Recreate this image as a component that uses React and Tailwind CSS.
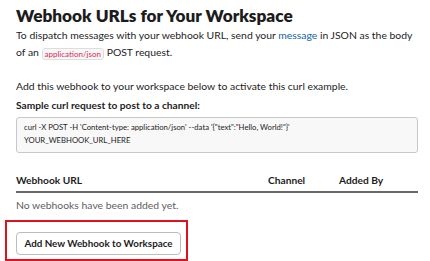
import React from 'react'

const COLUMNS = ['Webhook URL', 'Channel', 'Added By']

export default function App() {
  return (
    <div className="min-h-screen bg-white text-[#1d1c1d] font-['Lato','Noto_Sans',sans-serif] pl-4 pr-3 pt-[4px]">
      <h1 className="text-[17.2px] font-extrabold leading-[24px]">Webhook URLs for Your Workspace</h1>
      <p className="text-[10.4px] leading-[17px] mt-[-1.5px]">
        To dispatch messages with your webhook URL, send your{' '}
        <a className="text-[#1264a3]">message</a> in JSON as the body of an{' '}
        <code className="inline-block font-['Lato',sans-serif] text-[8px] leading-[10px] text-[#e01e5a] bg-[#f8f8f8] border border-[#dddddd] rounded-[3px] px-[2px] align-[-1px]">application/json</code>{' '}
        POST request.
      </p>
      <p className="text-[10.4px] leading-[17px] mt-[17px]">Add this webhook to your workspace below to activate this curl example.</p>
      <h2 className="text-[10.2px] leading-[17px] font-bold mt-[2px]">Sample curl request to post to a channel:</h2>
      <div className="mt-[3px] w-[402px] border border-[#c8c8c8] rounded-[3px] bg-[#f8f8f8] px-[7px] pt-[3px] pb-[5px] text-[7.7px] leading-[13px]">
        curl -X POST -H 'Content-type: application/json' --data '{'{'}"text":"Hello, World!"{'}'}'<br />
        YOUR_WEBHOOK_URL_HERE
      </div>
      <div className="w-[402px] mt-[19.5px] grid grid-cols-[252px_71px_1fr] text-[10.2px] font-bold leading-[17px] pb-[2px] border-b-2 border-[#696969]">
        {COLUMNS.map(c => <div key={c}>{c}</div>)}
      </div>
      <p className="text-[10.4px] leading-[17px] text-[#616061] mt-[4px]">No webhooks have been added yet.</p>
      <div className="mt-[5.5px] -ml-[11px] w-[183px] border-2 border-[#e0121e] pl-[9px] pt-[7px] pb-[4px]">
        <button className="h-[23px] w-[165px] border border-[#bcbcbc] rounded-[4px] bg-white text-[9.8px] font-bold leading-none">
          Add New Webhook to Workspace
        </button>
      </div>
    </div>
  )
}
